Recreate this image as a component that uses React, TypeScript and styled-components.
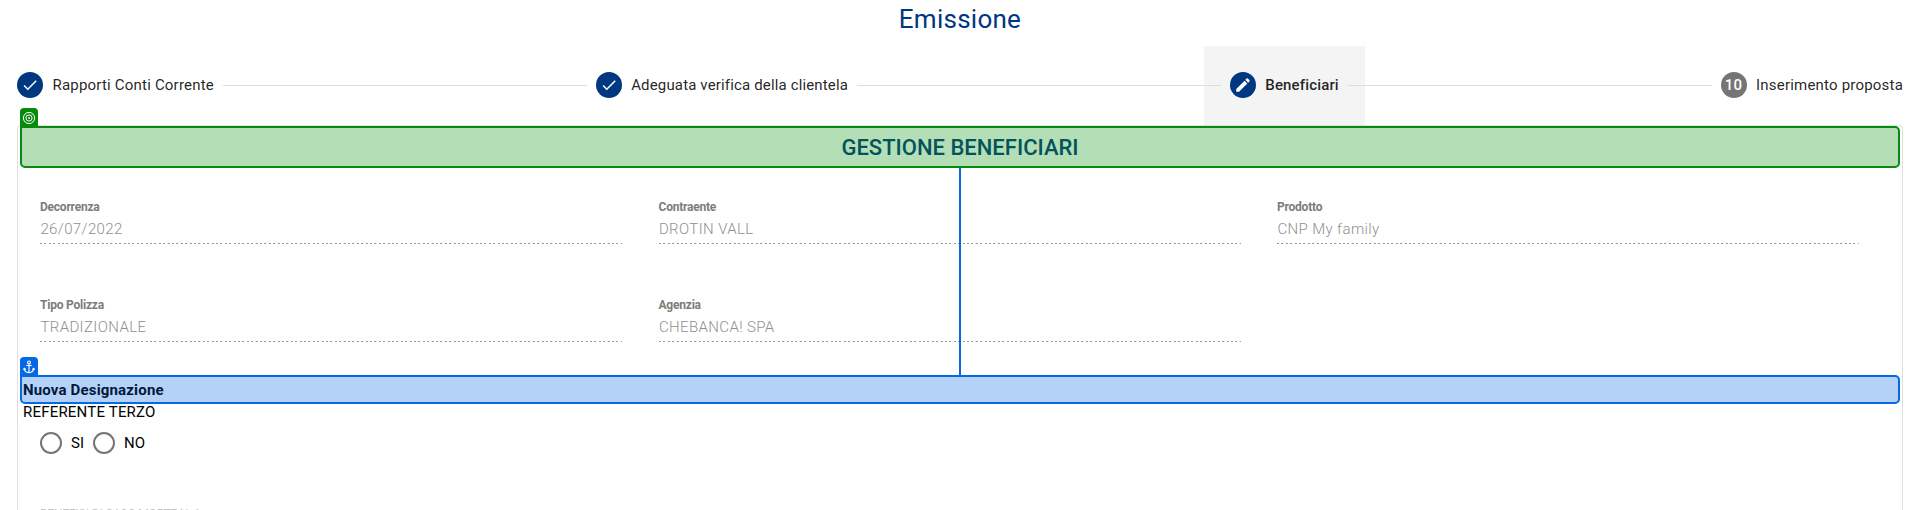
import React from 'react';
import styled, { createGlobalStyle, css } from 'styled-components';

const GlobalStyle = createGlobalStyle`
  * { box-sizing: border-box; }
  body {
    margin: 0;
    background: #fff;
    color: rgba(0, 0, 0, 0.87);
    font: 400 15px/20px Roboto, "Liberation Sans", sans-serif;
  }
`;

const Page = styled.main`
  display: flex;
  flex-direction: column;
  height: 510px;
  padding: 0 17px;
  overflow: hidden;
`;

const Title = styled.h1`
  flex: none;
  margin: 0;
  height: 46px;
  padding-top: 3px;
  color: #003781;
  font-size: 26px;
  line-height: 32px;
  font-weight: 400;
  letter-spacing: 0.25px;
  text-align: center;
`;

const Stepper = styled.nav`
  flex: none;
  display: flex;
  align-items: center;
  height: 79px;
`;

const Step = styled.div<{ $active?: boolean; $edge?: 'first' | 'last' }>`
  display: flex;
  align-items: center;
  gap: 9.5px;
  height: 79px;
  padding: 0 26px 1px;
  white-space: nowrap;
  letter-spacing: 0.15px;
  ${p => p.$edge === 'first' && css`padding-left: 0; letter-spacing: 0.2px;`}
  ${p => p.$edge === 'last' && css`padding-right: 0; letter-spacing: 0.2px;`}
  ${p => p.$active && css`background: #f4f4f4; font-weight: 500;`}
`;

const StepIcon = styled.span<{ $idle?: boolean }>`
  display: flex;
  align-items: center;
  justify-content: center;
  width: 26px;
  height: 26px;
  border-radius: 50%;
  background: ${p => (p.$idle ? '#757575' : '#003781')};
  color: #fff;
  font-size: 15px;
  font-weight: 500;
`;

const StepLine = styled.span`
  flex: 1;
  height: 1px;
  margin: 0 -17px;
  background: #dedede;
  z-index: 1;
`;

const Panel = styled.section`
  flex: none;
  height: 400px;
  border: 1px solid #e0e0e0;
  border-bottom: 0;
  border-radius: 4px 4px 0 0;
  padding: 0 2px;
`;

const Marked = styled.div<{ $tone: 'target' | 'anchor' }>`
  position: relative;
  display: flex;
  align-items: center;
  border: 2px solid;
  border-radius: 0 5px 5px 5px;
  ${p =>
    p.$tone === 'target'
      ? css`
          height: 42px;
          padding-top: 2px;
          justify-content: center;
          border-color: #068b0c;
          background: #b4deb6;
          color: #02535c;
          font-size: 22px;
          font-weight: 500;
        `
      : css`
          height: 29px;
          padding-left: 1px;
          border-color: #0469e3;
          background: #b4d2f7;
          color: #01183b;
          font-size: 15px;
          font-weight: 700;
          letter-spacing: 0.17px;
        `}
`;

const Tag = styled.span<{ $color: string }>`
  position: absolute;
  left: -2px;
  top: -20px;
  display: flex;
  align-items: center;
  justify-content: center;
  width: 18px;
  height: 19px;
  border-radius: 4px 4px 0 0;
  background: ${p => p.$color};
`;

const Connector = styled.span`
  position: absolute;
  left: 937px;
  top: 40px;
  width: 2px;
  height: 207px;
  background: #0469e3;
`;

const Fields = styled.div`
  display: grid;
  grid-template-columns: repeat(3, 582px);
  column-gap: 36.5px;
  grid-auto-rows: 98px;
  height: 207px;
  padding: 30px 20px 0;
`;

const Field = styled.div`
  display: flex;
  flex-direction: column;
  height: 46px;
  background: repeating-linear-gradient(to right, #999 0 2px, transparent 2px 4.4px) left bottom / 100% 1px no-repeat;
`;

const FieldLabel = styled.label`
  height: 19px;
  color: #7c7c7c;
  font-size: 12px;
  line-height: 18px;
  font-weight: 700;
  letter-spacing: -0.22px;
`;

const FieldValue = styled.span`
  color: #8f8f8f;
  font-size: 15px;
  line-height: 24px;
  font-weight: 300;
  letter-spacing: 0.38px;
  padding-left: 0.4px;
`;

const Referent = styled.p`
  margin: 0;
  height: 28px;
  padding: 0 3px;
  line-height: 16px;
  color: #000;
  letter-spacing: 0.2px;
`;

const Radios = styled.div`
  display: flex;
  align-items: center;
  gap: 9px;
  height: 22px;
  padding-left: 20px;
  color: #000;
`;

const Option = styled.label`
  display: flex;
  align-items: center;
  gap: 9px;
`;

const RadioMark = styled.span`
  width: 22px;
  height: 22px;
  border: 2px solid #757575;
  border-radius: 50%;
`;

const NextHeading = styled.h2`
  margin: 53px 0 0 20px;
  color: #c4c4c4;
  font-size: 12px;
  line-height: 14px;
  font-weight: 400;
  letter-spacing: -0.2px;
`;

const Check = () => (
  <svg width="18" height="18" viewBox="0 0 24 24" fill="#fff">
    <path d="M9 16.17 4.83 12l-1.42 1.41L9 19 21 7l-1.41-1.41z" />
  </svg>
);

const Pencil = () => (
  <svg width="18" height="18" viewBox="0 0 24 24" fill="#fff">
    <path d="M3 17.25V21h3.75L17.81 9.94l-3.75-3.75L3 17.25zM20.71 7.04a1 1 0 0 0 0-1.41l-2.34-2.34a1 1 0 0 0-1.41 0l-1.83 1.83 3.75 3.75 1.83-1.83z" />
  </svg>
);

const TargetIcon = () => (
  <svg width="14" height="14" viewBox="0 0 14 14" fill="none" stroke="#fff">
    <circle cx="7" cy="7" r="5.6" />
    <circle cx="7" cy="7" r="3.1" />
    <circle cx="7" cy="7" r="0.9" fill="#fff" stroke="none" />
  </svg>
);

const AnchorIcon = () => (
  <svg width="14" height="14" viewBox="0 0 14 14" fill="none" stroke="#fff" strokeWidth="1.1">
    <circle cx="7" cy="2.4" r="1.4" />
    <path d="M7 3.8V12.6M4.3 5.5h5.4M2.2 8.6c.3 2.5 2.2 3.8 4.8 4 2.6-.2 4.5-1.5 4.8-4M1.3 9.8l1-1.5 1.4 1.2M12.7 9.8l-1-1.5-1.4 1.2" />
  </svg>
);

const fields = [
  ['Decorrenza', '26/07/2022'],
  ['Contraente', 'DROTIN VALL'],
  ['Prodotto', 'CNP My family'],
  ['Tipo Polizza', 'TRADIZIONALE'],
  ['Agenzia', 'CHEBANCA! SPA'],
];

export default function App() {
  return (
    <>
      <GlobalStyle />
      <Page>
        <Title>Emissione</Title>
        <Stepper>
          <Step $edge="first"><StepIcon><Check /></StepIcon>Rapporti Conti Corrente</Step>
          <StepLine />
          <Step><StepIcon><Check /></StepIcon>Adeguata verifica della clientela</Step>
          <StepLine />
          <Step $active><StepIcon><Pencil /></StepIcon>Beneficiari</Step>
          <StepLine />
          <Step $edge="last"><StepIcon $idle>10</StepIcon>Inserimento proposta</Step>
        </Stepper>
        <Panel>
          <Marked $tone="target">
            <Tag $color="#068b0c"><TargetIcon /></Tag>
            GESTIONE BENEFICIARI
            <Connector />
          </Marked>
          <Fields>
            {fields.map(([label, value]) => (
              <Field key={label}>
                <FieldLabel>{label}</FieldLabel>
                <FieldValue>{value}</FieldValue>
              </Field>
            ))}
          </Fields>
          <Marked $tone="anchor">
            <Tag $color="#0469e3"><AnchorIcon /></Tag>
            Nuova Designazione
          </Marked>
          <Referent>REFERENTE TERZO</Referent>
          <Radios>
            <Option><RadioMark />SI</Option>
            <Option><RadioMark />NO</Option>
          </Radios>
          <NextHeading>BENEFICI DI CASO MORTE N. 1</NextHeading>
        </Panel>
      </Page>
    </>
  );
}
